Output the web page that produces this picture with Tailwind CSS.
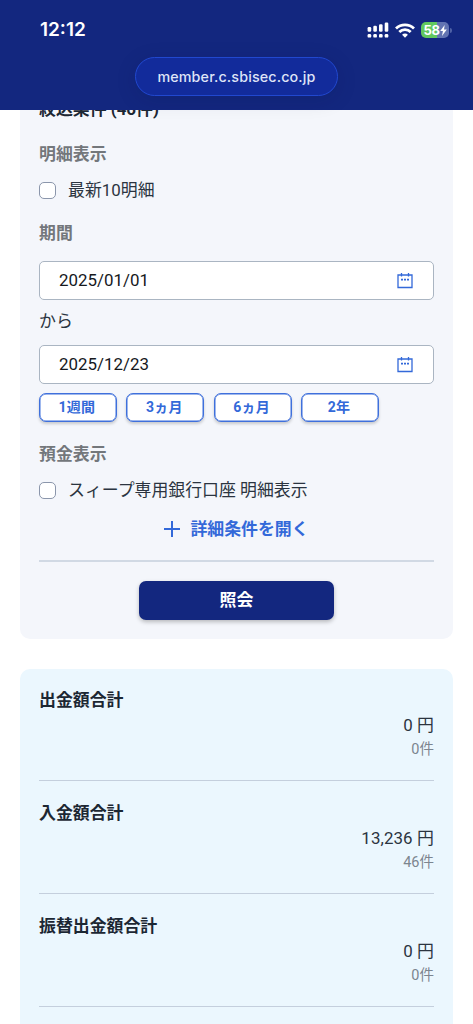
<!DOCTYPE html>
<html lang="ja">
<head>
<meta charset="utf-8">
<meta name="viewport" content="width=device-width, initial-scale=1">
<title>入出金明細</title>
<script src="https://cdn.jsdelivr.net/npm/@tailwindcss/browser@4"></script>
</head>
<body class="h-[1024px] overflow-hidden bg-white font-[Roboto,'Noto_Sans_CJK_JP',sans-serif] text-[16.9px] leading-6 text-[#2b3440]">
<header class="flex h-[110px] flex-col bg-[#13277f] font-[Inter,'Liberation_Sans',sans-serif]">
  <div class="flex h-[57px] items-center justify-between pt-[3px] pr-[22px] pl-10 text-white">
    <span class="text-[19px] font-semibold">12:12</span>
    <div class="flex items-center">
      <svg class="h-4 w-[22px]" viewBox="0 0 22 16" fill="#fff">
        <rect x=".6" y="5" width="3.6" height="4.8" rx="1.2"/><rect x="6.3" y="3.8" width="3.6" height="6" rx="1.2"/><rect x="12" y="2.2" width="3.6" height="7.6" rx="1.2"/><rect x="17.7" y=".5" width="3.6" height="9.3" rx="1.2"/>
        <rect x=".6" y="12" width="3.6" height="3.6" rx="1.2"/><rect x="6.3" y="12" width="3.6" height="3.6" rx="1.2"/><rect x="12" y="12" width="3.6" height="3.6" rx="1.2"/><rect x="17.7" y="12" width="3.6" height="3.6" rx="1.2"/>
      </svg>
      <svg class="ml-[6px] h-[15px] w-5" viewBox="0 0 20 15" fill="none" stroke="#fff" stroke-width="2.8">
        <path d="M1 5.4a13 13 0 0 1 18 0"/><path d="M4.3 9a8.1 8.1 0 0 1 11.4 0"/><path d="M10 14.7l-2.9-2.9a4 4 0 0 1 5.8 0z" fill="#fff" stroke="none"/>
      </svg>
      <div class="ml-[6px] flex h-4 w-7 items-center justify-center rounded-[5px] bg-linear-to-r from-[#62c85e] from-58% to-[#6274b2] to-58%">
        <span class="text-[13px] leading-4 font-bold tracking-[-0.3px]">58</span>
        <svg class="h-[11px] w-[7px]" viewBox="0 0 7 11" fill="#fff"><path d="M4.7 0L.2 6.1h2.7L2 11l4.8-6.5H4z"/></svg>
      </div>
      <span class="-mr-[1px] ml-px h-[5px] w-[2px] rounded-r-full bg-[#4f61a6]"></span>
    </div>
  </div>
  <div class="mx-auto flex h-[39px] w-[203px] items-center justify-center rounded-full border border-[#2148cf] bg-[#122b9b] text-[14.3px] font-medium tracking-[0.15px] text-[#dfe4f7] shadow-[0_4px_20px_rgba(10,20,70,0.15)]">member.c.sbisec.co.jp</div>
</header>

<main class="h-[914px] overflow-hidden px-5">
  <section class="-mt-[13px] h-[542px] rounded-b-[10px] bg-[#f4f6fb] pr-[19px] pl-[19px]">
    <h2 class="h-6 font-bold text-[#1c2733]">絞込条件 (46件)</h2>
    <h3 class="mt-[21px] font-bold text-[#73777b]">明細表示</h3>
    <label class="mt-3 flex items-center"><span class="mr-3 size-[17px] rounded-[5px] border-[1.5px] border-[#8b96ab] bg-white"></span>最新10明細</label>
    <h3 class="mt-[19px] font-bold text-[#73777b]">期間</h3>
    <div class="mt-4 flex h-[39px] items-center justify-between rounded-[5px] border border-[#aab5c2] bg-white pr-5 pl-[19px] text-[#16191d]">
      <span class="pb-[2px]">2025/01/01</span>
      <svg class="size-4" viewBox="0 0 16 16" fill="none" stroke="#3369d9" stroke-width="1.3"><path d="M1 2h14v12.5H1z"/><path d="M4.5 0v3.4M11.5 0v3.4"/><path d="M4 6.6h2M7 6.6h2M10 6.6h2" stroke-width="1.6"/></svg>
    </div>
    <p class="pt-[9px] pb-[12px]">から</p>
    <div class="flex h-[39px] items-center justify-between rounded-[5px] border border-[#aab5c2] bg-white pr-5 pl-[19px] text-[#16191d]">
      <span class="pb-[2px]">2025/12/23</span>
      <svg class="size-4" viewBox="0 0 16 16" fill="none" stroke="#3369d9" stroke-width="1.3"><path d="M1 2h14v12.5H1z"/><path d="M4.5 0v3.4M11.5 0v3.4"/><path d="M4 6.6h2M7 6.6h2M10 6.6h2" stroke-width="1.6"/></svg>
    </div>
    <div class="mt-[9px] grid w-[340px] grid-cols-4 gap-[9.5px] text-[14px] font-bold text-[#3369d9]">
      <button class="h-[29px] rounded-[7px] border border-[#3f70dc] bg-white pr-[2px] pb-[2px] leading-none tracking-[0.2px] shadow-[0_2px_3px_rgba(0,0,0,0.18),inset_0_0_0_0.5px_#3f70dc]">1週間</button>
      <button class="h-[29px] rounded-[7px] border border-[#3f70dc] bg-white pr-[2px] pb-[2px] leading-none tracking-[0.2px] shadow-[0_2px_3px_rgba(0,0,0,0.18),inset_0_0_0_0.5px_#3f70dc]">3ヵ月</button>
      <button class="h-[29px] rounded-[7px] border border-[#3f70dc] bg-white pr-[2px] pb-[2px] leading-none tracking-[0.2px] shadow-[0_2px_3px_rgba(0,0,0,0.18),inset_0_0_0_0.5px_#3f70dc]">6ヵ月</button>
      <button class="h-[29px] rounded-[7px] border border-[#3f70dc] bg-white pr-[2px] pb-[2px] leading-none tracking-[0.2px] shadow-[0_2px_3px_rgba(0,0,0,0.18),inset_0_0_0_0.5px_#3f70dc]">2年</button>
    </div>
    <h3 class="mt-[20px] font-bold text-[#73777b]">預金表示</h3>
    <label class="mt-3 flex items-center"><span class="mr-3 size-[17px] rounded-[5px] border-[1.5px] border-[#8b96ab] bg-white"></span>スィープ専用銀行口座 明細表示</label>
    <div class="mt-[15px] flex items-center justify-center font-bold text-[#3369d9]">
      <svg class="mr-[10px] size-4" viewBox="0 0 16 16" stroke="#3369d9" stroke-width="2"><path d="M8 0v16M0 8h16"/></svg>詳細条件を開く
    </div>
    <hr class="mt-[19px] border-t-2 border-[#d1d9e4]">
    <button class="mx-auto mt-[19px] flex h-[39px] w-[195px] items-center justify-center rounded-[7px] bg-[#13277f] pb-[2px] font-bold text-white shadow-[0_2px_4px_rgba(0,0,0,0.25)]">照会</button>
  </section>

  <section class="mt-[30px] rounded-t-[10px] bg-[#ebf7fe] px-[19px]">
    <div class="h-[112px] border-b border-[#c4cfdd] pt-[19px]">
      <h3 class="font-bold text-[#1c2733]">出金額合計</h3>
      <p class="mt-px text-right tracking-[0.1px]">0 円</p>
      <p class="mt-px text-right text-[14.5px] text-[#7c858f]">0件</p>
    </div>
    <div class="h-[113px] border-b border-[#c4cfdd] pt-5">
      <h3 class="font-bold text-[#1c2733]">入金額合計</h3>
      <p class="mt-px text-right tracking-[0.1px]">13,236 円</p>
      <p class="mt-px text-right text-[14.5px] text-[#7c858f]">46件</p>
    </div>
    <div class="h-[113px] border-b border-[#c4cfdd] pt-5">
      <h3 class="font-bold text-[#1c2733]">振替出金額合計</h3>
      <p class="mt-px text-right tracking-[0.1px]">0 円</p>
      <p class="mt-px text-right text-[14.5px] text-[#7c858f]">0件</p>
    </div>
    <div class="h-[113px]"></div>
  </section>
</main>
</body>
</html>
